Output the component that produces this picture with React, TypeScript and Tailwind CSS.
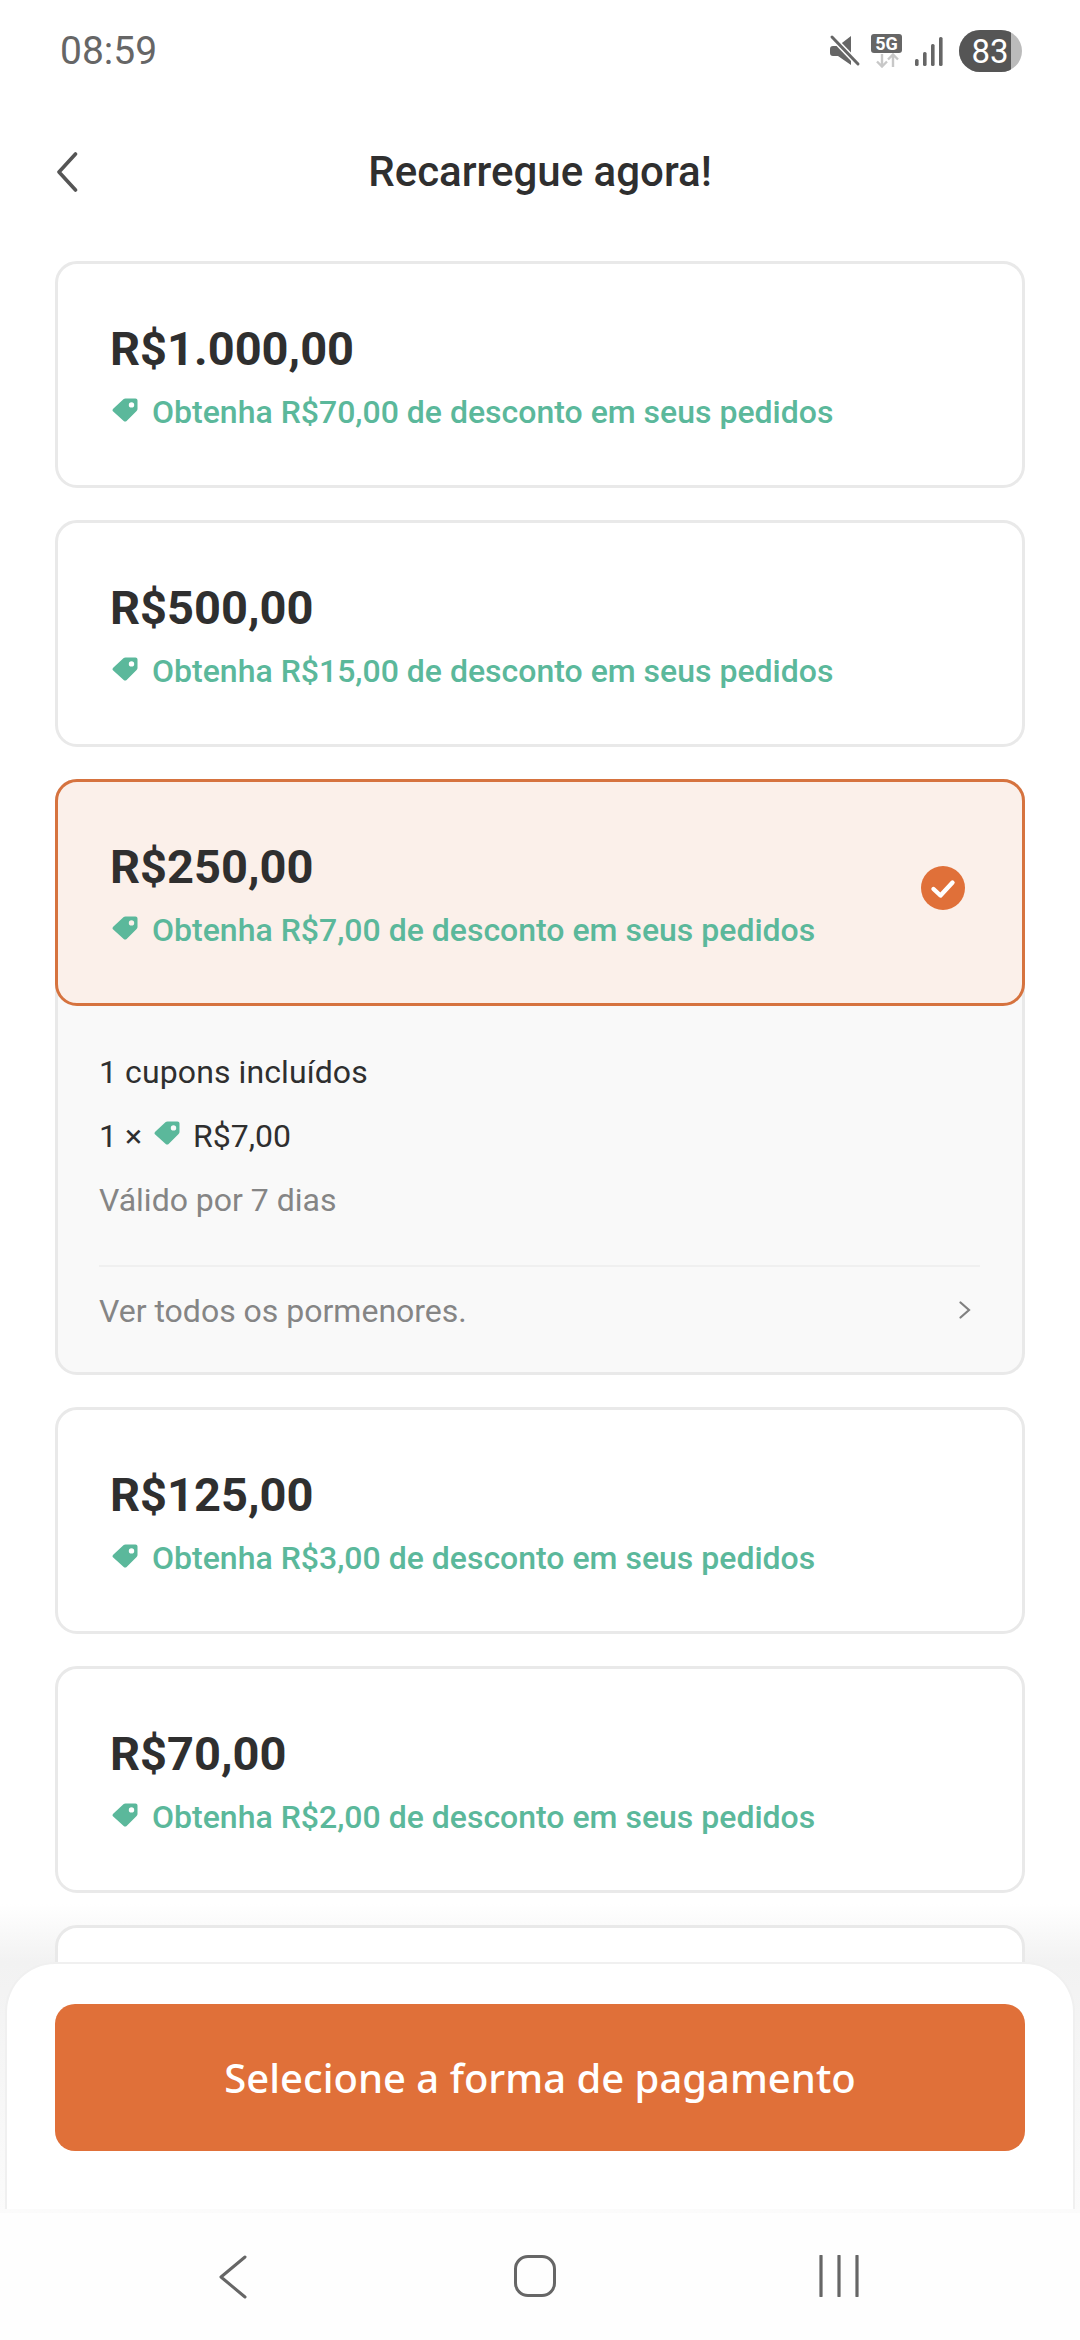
import type { ReactNode } from "react";

const roboto = "font-['Roboto',sans-serif]";

function TagIcon({ className }: { className?: string }) {
  return (
    <svg viewBox="0 0 26 24" className={className}>
      <path
        fill="#5bb89b"
        d="M13.5 0.5H23.5C24.6 0.5 25.5 1.4 25.5 2.5V11C25.5 11.8 25.2 12.4 24.6 13L14.6 23C13.8 23.8 12.5 23.8 11.7 23L1.2 13.6C0.3 12.8 0.3 11.5 1.2 10.7L11.4 1.3C12 0.8 12.7 0.5 13.5 0.5ZM19.5 4.2A2.7 2.7 0 1 0 19.5 9.6A2.7 2.7 0 1 0 19.5 4.2Z"
      />
    </svg>
  );
}

function StatusIcons() {
  return (
    <div className="flex items-center">
      <svg viewBox="0 0 34 34" className="w-[34px] h-[34px] mr-[9px]">
        <path fill="#666" d="M2 15C2 13 3 12 5 12H10L23 2V31L10 22H5C3 22 2 21 2 19Z" />
        <path d="M4 3L30 30" stroke="#fff" strokeWidth="6" />
        <path d="M4 3L30 30" stroke="#666" strokeWidth="3" strokeLinecap="round" />
      </svg>
      <div className="flex flex-col items-center mr-[12px]">
        <div className="w-[31px] h-[19px] rounded-[3px] bg-[#666] flex items-center justify-center text-white text-[18px] leading-none font-bold font-['Roboto',sans-serif]">
          5G
        </div>
        <svg viewBox="0 0 30 15" className="w-[30px] h-[15px]">
          <path d="M10 1V13M5 8.5L10 13.5L15 8.5" fill="none" stroke="#c8c8c8" strokeWidth="2.4" />
          <path d="M21 14V2M16 6.5L21 1.5L26 6.5" fill="none" stroke="#c8c8c8" strokeWidth="2.4" />
        </svg>
      </div>
      <svg viewBox="0 0 30 30" className="w-[30px] h-[30px] mr-[15px]">
        <rect x="1" y="23" width="3.6" height="7" rx="1.6" fill="#666" />
        <rect x="9" y="16" width="3.6" height="14" rx="1.6" fill="#666" />
        <rect x="17" y="8" width="3.6" height="22" rx="1.6" fill="#666" />
        <rect x="25" y="1" width="3.6" height="29" rx="1.6" fill="#666" />
      </svg>
      <div className="relative w-[63px] h-[42px] rounded-full bg-[#bbb] overflow-hidden">
        <div className="absolute inset-y-0 left-0 w-[52px] bg-[#555]" />
        <div className={`relative h-full flex items-center justify-center text-white text-[33px] leading-none pr-[1px] ${roboto}`}>
          83
        </div>
      </div>
    </div>
  );
}

function Amount({ value, discount }: { value: string; discount: string }) {
  return (
    <div>
      <div className={`text-[47px] leading-[56px] font-bold text-[#2f2f2f] ${roboto}`}>{value}</div>
      <div className="flex items-center mt-[15px]">
        <TagIcon className="w-[26px] h-[24px] ml-[2px] mr-[14px] mt-[-5px]" />
        <span className={`text-[32px] leading-[40px] font-medium text-[#5bb89b] ${roboto}`}>
          Obtenha {discount} de desconto em seus pedidos
        </span>
      </div>
    </div>
  );
}

function Card({ children }: { children: ReactNode }) {
  return (
    <div className="h-[227px] rounded-[22px] border-[3px] border-[#e9e9e9] bg-white pl-[52px] pt-[57px]">
      {children}
    </div>
  );
}

function SelectedCard() {
  return (
    <div className="rounded-[22px] border-[3px] border-[#e9e9e9] bg-[#f9f9f9]">
      <div className="h-[227px] -m-[3px] mb-0 rounded-[22px] border-[3px] border-[#d6733f] bg-[#fbf0ea] pl-[52px] pr-[57px] pt-[57px] flex items-start justify-between">
        <Amount value="R$250,00" discount="R$7,00" />
        <svg viewBox="0 0 44 44" className="w-[44px] h-[44px] mt-[27px]">
          <circle cx="22" cy="22" r="22" fill="#e07039" />
          <path d="M12.5 23L19.5 29.5L31.5 16.5" fill="none" stroke="#fff" strokeWidth="4.4" strokeLinecap="round" strokeLinejoin="round" />
        </svg>
      </div>
      <div className={`pl-[41px] pr-[42px] ${roboto}`}>
        <div className="text-[32px] leading-[40px] tracking-[0.1px] text-[#2f2f2f] pt-[46px]">1 cupons incluídos</div>
        <div className="flex items-center text-[32px] leading-[40px] text-[#2f2f2f] mt-[24px]">
          <span>1 ×</span>
          <TagIcon className="w-[26px] h-[24px] ml-[12px] mr-[13px] mt-[-6px]" />
          <span>R$7,00</span>
        </div>
        <div className="text-[32px] leading-[40px] text-[#858585] mt-[24px]">Válido por 7 dias</div>
        <div className="border-t-2 border-[#f0f0f0] mt-[45px] h-[107px] pb-[17px] flex items-center justify-between">
          <span className="text-[32px] text-[#858585]">Ver todos os pormenores.</span>
          <svg viewBox="0 0 12 18" className="w-[12px] h-[18px] mr-[9px] mt-[-2px]">
            <path d="M1.5 1.5L10 9L1.5 16.5" fill="none" stroke="#808080" strokeWidth="2.2" strokeLinecap="round" />
          </svg>
        </div>
      </div>
    </div>
  );
}

export default function App() {
  return (
    <div className="relative w-[1080px] h-[2340px] overflow-hidden bg-white">
      {/* status bar */}
      <div className="h-[102px] pl-[60px] pr-[58px] flex items-center justify-between">
        <span className={`text-[39px] text-[#666] ${roboto}`}>08:59</span>
        <StatusIcons />
      </div>

      {/* header */}
      <div className="relative h-[140px] flex items-center justify-center">
        <svg viewBox="0 0 24 40" className="absolute left-[55px] top-[50px] w-[24px] h-[40px]">
          <path d="M20.5 2L4 20L20.5 38" fill="none" stroke="#555" strokeWidth="3.6" strokeLinecap="round" strokeLinejoin="round" />
        </svg>
        <h1 className={`text-[42px] leading-[48px] font-medium text-[#2f2f2f] ${roboto}`}>Recarregue agora!</h1>
      </div>

      {/* shadow the sheet casts, behind the cards */}
      <div className="absolute inset-x-0 bottom-[378px] h-[58px] bg-gradient-to-b from-white to-[#f2f2f2]" />

      {/* packages */}
      <div className="relative flex flex-col gap-[32px] px-[55px] pt-[19px]">
        <Card>
          <Amount value="R$1.000,00" discount="R$70,00" />
        </Card>
        <Card>
          <Amount value="R$500,00" discount="R$15,00" />
        </Card>
        <SelectedCard />
        <Card>
          <Amount value="R$125,00" discount="R$3,00" />
        </Card>
        <Card>
          <Amount value="R$70,00" discount="R$2,00" />
        </Card>
        <Card>
          <div />
        </Card>
      </div>

      {/* payment sheet + nav */}
      <div className="absolute inset-x-0 bottom-0">
        <div className="h-[251px] px-[5px] pb-[4px] bg-gradient-to-b from-[#f2f2f2] to-[#fbfbfb]">
          <div className="h-full rounded-t-[50px] border-x-2 border-t-2 border-[#f0f0f0] bg-white px-[48px] pt-[40px]">
            <button className="w-full h-[147px] rounded-[20px] bg-[#e07039] text-white text-[40px] font-medium font-['Noto_Sans',sans-serif] flex items-center justify-center">
              Selecione a forma de pagamento
            </button>
          </div>
        </div>
        <div className="h-[127px] bg-[#fefefe] flex items-start pl-[218px] pt-[42px]">
          <svg viewBox="0 0 30 44" className="w-[30px] h-[44px]">
            <path d="M27 2L3 22L27 42" fill="none" stroke="#666" strokeWidth="3" strokeLinecap="round" strokeLinejoin="round" />
          </svg>
          <div className="w-[42px] h-[42px] ml-[266px] rounded-[14px] border-[3.5px] border-[#666]" />
          <svg viewBox="0 0 40 42" className="w-[40px] h-[42px] ml-[263px]">
            <path d="M2 1V41M20 1V41M38 1V41" fill="none" stroke="#666" strokeWidth="3.2" strokeLinecap="round" />
          </svg>
        </div>
      </div>
    </div>
  );
}
